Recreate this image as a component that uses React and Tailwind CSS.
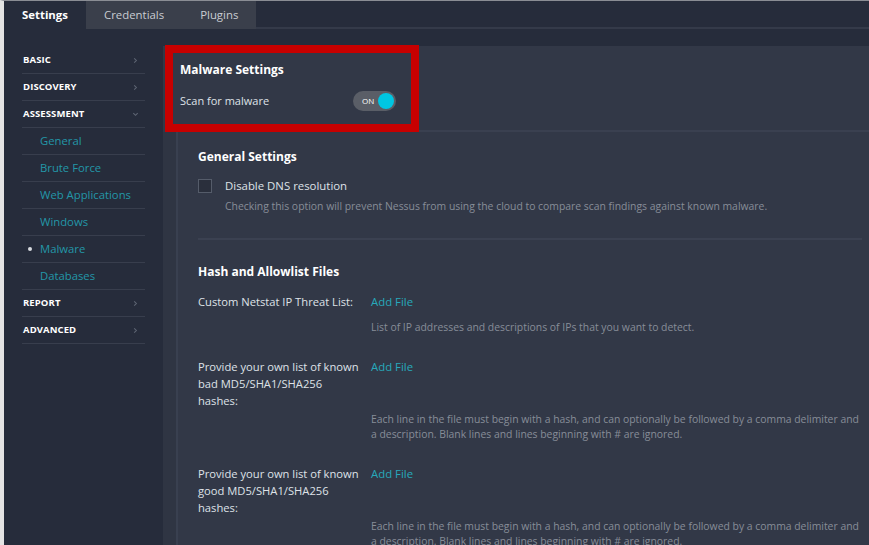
import React, { useState } from 'react';

const sections = [
  { label: 'BASIC', open: false },
  { label: 'DISCOVERY', open: false },
  { label: 'ASSESSMENT', open: true },
];

const subItems = ['General', 'Brute Force', 'Web Applications', 'Windows', 'Malware', 'Databases'];

const Chevron = ({ down }) => (
  <svg width="7" height="7" viewBox="0 0 8 8" className="text-[#5f6674]">
    {down ? (
      <path d="M1.5 2.5 L4 5 L6.5 2.5" fill="none" stroke="currentColor" strokeWidth="1.2" />
    ) : (
      <path d="M2.5 1.5 L5 4 L2.5 6.5" fill="none" stroke="currentColor" strokeWidth="1.2" />
    )}
  </svg>
);

const SectionRow = ({ label, open }) => (
  <div className="h-[27px] flex items-center justify-between pl-[1px] pr-[6px] border-b border-[#383e4d]">
    <span className="text-[9.5px] font-bold text-white tracking-[0.1px]">{label}</span>
    <Chevron down={open} />
  </div>
);

// label comes as lines, the form breaks them itself
const FileRow = ({ lines, desc }) => (
  <div className="flex mb-[23px]">
    <div className="w-[173px] shrink-0 text-[11.2px] leading-[17px] text-[#dfe2e7]">
      {lines.map((l) => (
        <div key={l}>{l}</div>
      ))}
    </div>
    <div className="flex-1">
      <div className="text-[11.4px] leading-[17px] text-[#27a9bb]">Add File</div>
      <div className={`text-[10.4px] leading-[15px] text-[#878d98] ${lines.length > 1 ? 'mt-[37px]' : 'mt-[10px]'}`}>
        {desc}
      </div>
    </div>
  </div>
);

const App = () => {
  const [scan, setScan] = useState(true);
  const [dns, setDns] = useState(false);
  const active = 'Malware';

  const hashDesc =
    'Each line in the file must begin with a hash, and can optionally be followed by a comma delimiter and a description. Blank lines and lines beginning with # are ignored.';

  return (
    <div
      className="h-[545px] w-[869px] overflow-hidden bg-[#262c3b] border-l-4 border-[#e4e4e4] border-t border-t-[#8a8d94] flex flex-col"
      style={{ fontFamily: '"Open Sans", "Noto Sans", sans-serif' }}
    >
      {/* Tabs */}
      <div className="h-[28px] flex shrink-0">
        <div className="w-[82px] pl-[18px] flex items-center text-[11.4px] font-bold text-white bg-[#262c3b]">Settings</div>
        <div className="w-[170px] flex items-center bg-[#3a3f4b] text-[11.4px] text-[#c9ccd2]">
          <span className="pl-[18px]">Credentials</span>
          <span className="pl-[36px]">Plugins</span>
        </div>
        <div className="flex-1 border-b-2 border-[#343a49]" />
      </div>

      <div className="h-[17px] shrink-0" />

      <div className="flex flex-1 min-h-0">
        {/* Sidebar */}
        <div className="w-[159px] shrink-0 pl-[18px] pr-[18px] pt-[1px]">
          {sections.map((s) => (
            <SectionRow key={s.label} label={s.label} open={s.open} />
          ))}
          {subItems.map((item) => (
            <div key={item} className="h-[27px] flex items-center border-b border-[#383e4d] relative">
              {item === active && (
                <span className="absolute left-[6px] w-[4px] h-[4px] rounded-full bg-[#d8dbe0]" />
              )}
              <span className="pl-[18px] text-[11.3px] text-[#2397a8]">{item}</span>
            </div>
          ))}
          <SectionRow label="REPORT" />
          <SectionRow label="ADVANCED" />
        </div>

        {/* Main */}
        <div className="flex-1 bg-[#323847] flex flex-col min-w-0">
          {/* Header row */}
          <div className="flex shrink-0">
            <div className="w-[254px] h-[87px] ml-[2px] -mt-[1px] border-[8px] border-[#c70000] pl-[7px] pt-[8px]">
              <div className="text-[12px] font-bold text-white">Malware Settings</div>
              <div className="mt-[12px] flex items-center justify-between pr-[15px]">
                <span className="text-[11px] text-[#dfe2e7]">Scan for malware</span>
                <button
                  onClick={() => setScan(!scan)}
                  className="w-[43px] h-[20px] rounded-full bg-[#5a5e67] flex items-center justify-between pl-[9px] pr-[2px]"
                >
                  <span className="text-[8px] text-white">{scan ? 'ON' : 'OFF'}</span>
                  <span className="w-[16px] h-[16px] rounded-full bg-[#00c6e2]" />
                </button>
              </div>
            </div>
            <div className="flex-1 border-b-2 border-[#3a4050]" />
          </div>

          {/* Body */}
          <div className="flex flex-1 min-h-0">
            <div className="w-[15px] shrink-0 bg-[#2f3543] border-r-2 border-[#394050]" />
            <div className="flex-1 pl-[20px] pr-[7px] pt-[16px] overflow-hidden">
              <div className="text-[12px] font-bold text-white">General Settings</div>
              <div className="mt-[11px] flex">
                <button
                  onClick={() => setDns(!dns)}
                  className="w-[14px] h-[14px] mt-[2px] border border-[#555c6a] bg-[#2a2f3c] shrink-0"
                />
                <div className="pl-[13px]">
                  <div className="text-[11.4px] leading-[17px] text-[#dfe2e7]">Disable DNS resolution</div>
                  <div className="mt-[5px] text-[10.4px] leading-[15px] text-[#878d98]">
                    Checking this option will prevent Nessus from using the cloud to compare scan findings against known malware.
                  </div>
                </div>
              </div>

              <div className="mt-[24px] border-t-2 border-[#3b4151]" />

              <div className="mt-[23px] text-[12px] font-bold text-white">Hash and Allowlist Files</div>
              <div className="mt-[12px]">
                <FileRow
                  lines={['Custom Netstat IP Threat List:']}
                  desc="List of IP addresses and descriptions of IPs that you want to detect."
                />
                <FileRow lines={['Provide your own list of known', 'bad MD5/SHA1/SHA256', 'hashes:']} desc={hashDesc} />
                <FileRow lines={['Provide your own list of known', 'good MD5/SHA1/SHA256', 'hashes:']} desc={hashDesc} />
              </div>
            </div>
          </div>
        </div>
      </div>
    </div>
  );
};

export default App;
